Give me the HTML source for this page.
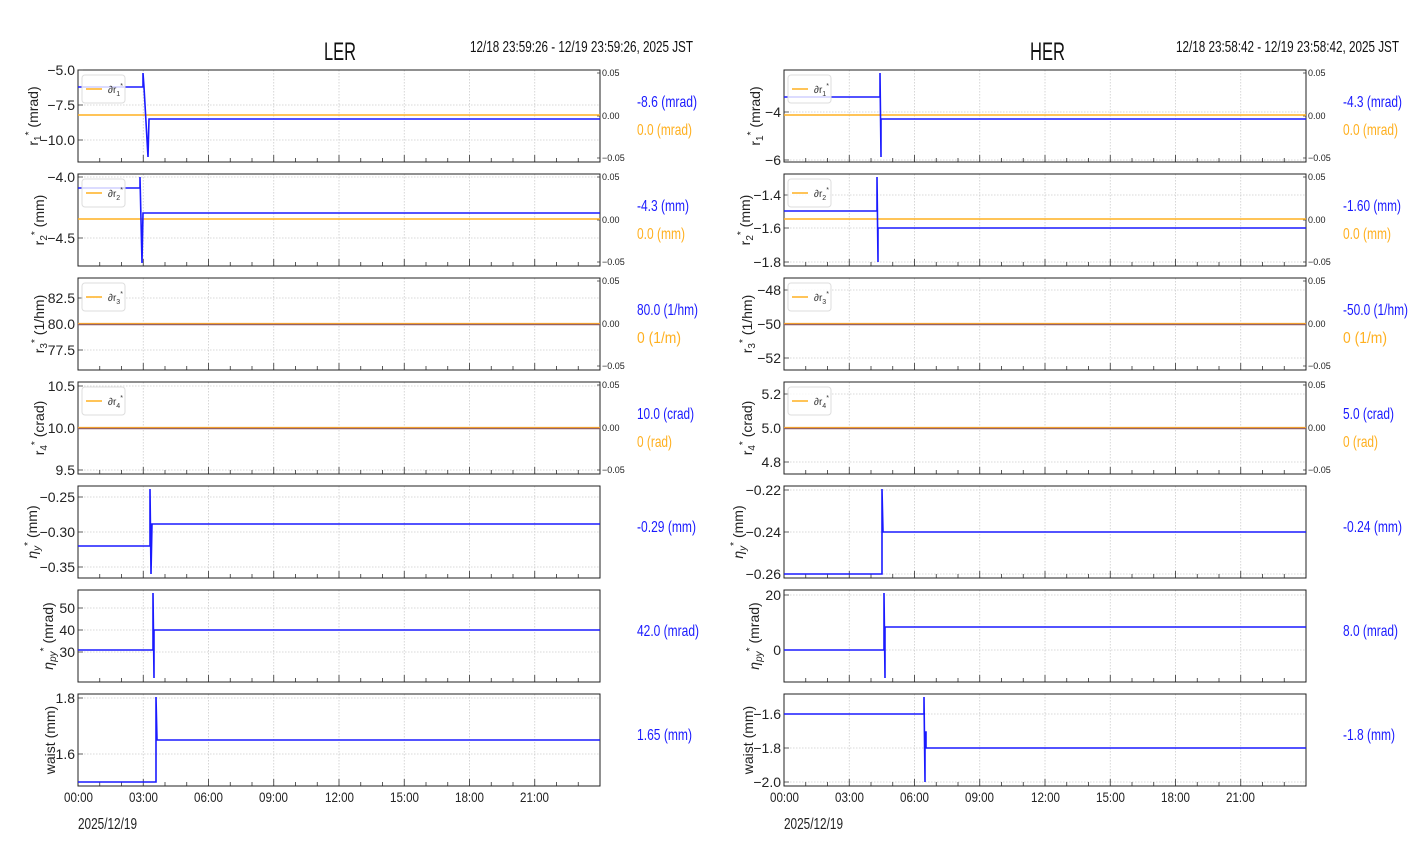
<!DOCTYPE html>
<html><head><meta charset="utf-8"><style>
html,body{margin:0;padding:0;background:#fff;}
svg{display:block;}
text{font-family:"Liberation Sans Narrow","Liberation Sans",sans-serif;}
.t{font-size:14px;fill:#222;}
.r{font-size:9px;fill:#222;}
.yl{font-family:"DejaVu Sans","Liberation Sans",sans-serif;font-size:14px;fill:#222;}
.b{fill:#1a1aff;}
.o{fill:#ffb020;}
.lg{font-size:10px;fill:#333;}
</style></head><body>
<svg width="1412" height="864" viewBox="0 0 1412 864" xmlns="http://www.w3.org/2000/svg">
<defs>
<g id="fr">
 <g stroke="#ccc" stroke-width="0.8" stroke-dasharray="1.5,1.5">
  <line x1="65.25" y1="0" x2="65.25" y2="92"/><line x1="130.5" y1="0" x2="130.5" y2="92"/><line x1="195.75" y1="0" x2="195.75" y2="92"/><line x1="261" y1="0" x2="261" y2="92"/><line x1="326.25" y1="0" x2="326.25" y2="92"/><line x1="391.5" y1="0" x2="391.5" y2="92"/><line x1="456.75" y1="0" x2="456.75" y2="92"/>
 </g>
 <g stroke="#333" stroke-width="0.8">
  <path d="M21.75 92v-4M43.5 92v-4M87 92v-4M108.75 92v-4M152.25 92v-4M174 92v-4M217.5 92v-4M239.25 92v-4M282.75 92v-4M304.5 92v-4M348 92v-4M369.75 92v-4M413.25 92v-4M435 92v-4M478.5 92v-4M500.25 92v-4"/>
  <path d="M65.25 92v-7M130.5 92v-7M195.75 92v-7M261 92v-7M326.25 92v-7M391.5 92v-7M456.75 92v-7"/>
 </g>
 <rect x="0" y="0" width="522" height="92" fill="none" stroke="#222" stroke-width="1"/>
</g>
<g id="ra">
 <path d="M522 3h-3M522 46h-3M522 88h-3" stroke="#333" stroke-width="0.8"/>
</g>
<g id="lgb"><rect x="4" y="5" width="43" height="28" rx="3" fill="#fff" fill-opacity="0.8" stroke="#ddd"/><line x1="8" y1="19" x2="24" y2="19" stroke="#ffb020" stroke-width="1.5"/></g>
</defs>

<text x="324" y="60" font-size="25" fill="#111" textLength="32" lengthAdjust="spacingAndGlyphs">LER</text>
<text x="470" y="52" font-size="16" fill="#111" textLength="223" lengthAdjust="spacingAndGlyphs">12/18 23:59:26 - 12/19 23:59:26, 2025 JST</text>
<text x="1030" y="60" font-size="25" fill="#111" textLength="35" lengthAdjust="spacingAndGlyphs">HER</text>
<text x="1176" y="52" font-size="16" fill="#111" textLength="223" lengthAdjust="spacingAndGlyphs">12/18 23:58:42 - 12/19 23:58:42, 2025 JST</text>

<g transform="translate(78,0)">
 <g transform="translate(0,70)">
  <g stroke="#ccc" stroke-width="0.8" stroke-dasharray="1.5,1.5"><line x1="0" y1="35" x2="522" y2="35"/><line x1="0" y1="70" x2="522" y2="70"/></g>
  <use href="#fr"/><use href="#ra"/>
  <path d="M0 0h5M0 35h5M0 70h5" stroke="#333" stroke-width="0.8"/>
  <line x1="0" y1="45" x2="522" y2="45" stroke="#ffb020" stroke-width="1.5"/>
  <path d="M0 17H65V3L66 17L70 87L71 49H522" fill="none" stroke="#1a1aff" stroke-width="1.6"/>
  <use href="#lgb"/>
 </g>
 <g transform="translate(0,174)">
  <g stroke="#ccc" stroke-width="0.8" stroke-dasharray="1.5,1.5"><line x1="0" y1="3" x2="522" y2="3"/><line x1="0" y1="64" x2="522" y2="64"/></g>
  <use href="#fr"/><use href="#ra"/>
  <path d="M0 3h5M0 64h5" stroke="#333" stroke-width="0.8"/>
  <line x1="0" y1="45" x2="522" y2="45" stroke="#ffb020" stroke-width="1.5"/>
  <path d="M0 14H62V3L64 89L65 39H522" fill="none" stroke="#1a1aff" stroke-width="1.6"/>
  <use href="#lgb"/>
 </g>
 <g transform="translate(0,278)">
  <g stroke="#ccc" stroke-width="0.8" stroke-dasharray="1.5,1.5"><line x1="0" y1="20" x2="522" y2="20"/><line x1="0" y1="72" x2="522" y2="72"/></g>
  <use href="#fr"/><use href="#ra"/>
  <path d="M0 20h5M0 46h5M0 72h5" stroke="#333" stroke-width="0.8"/>
  <line x1="0" y1="46.5" x2="522" y2="46.5" stroke="#8a5a6a" stroke-width="1.4"/>
  <line x1="0" y1="45.5" x2="522" y2="45.5" stroke="#f0a030" stroke-width="1.2"/>
  <use href="#lgb"/>
 </g>
 <g transform="translate(0,382)">
  <g stroke="#ccc" stroke-width="0.8" stroke-dasharray="1.5,1.5"><line x1="0" y1="4" x2="522" y2="4"/><line x1="0" y1="88" x2="522" y2="88"/></g>
  <use href="#fr"/><use href="#ra"/>
  <path d="M0 4h5M0 46h5M0 88h5" stroke="#333" stroke-width="0.8"/>
  <line x1="0" y1="46.5" x2="522" y2="46.5" stroke="#8a5a6a" stroke-width="1.4"/>
  <line x1="0" y1="45.5" x2="522" y2="45.5" stroke="#f0a030" stroke-width="1.2"/>
  <use href="#lgb"/>
 </g>
 <g transform="translate(0,486)">
  <g stroke="#ccc" stroke-width="0.8" stroke-dasharray="1.5,1.5"><line x1="0" y1="11" x2="522" y2="11"/><line x1="0" y1="46" x2="522" y2="46"/><line x1="0" y1="81" x2="522" y2="81"/></g>
  <use href="#fr"/>
  <path d="M0 11h5M0 46h5M0 81h5" stroke="#333" stroke-width="0.8"/>
  <path d="M0 60H72V3L73 88L74 38H522" fill="none" stroke="#1a1aff" stroke-width="1.6"/>
 </g>
 <g transform="translate(0,590)">
  <g stroke="#ccc" stroke-width="0.8" stroke-dasharray="1.5,1.5"><line x1="0" y1="18" x2="522" y2="18"/><line x1="0" y1="40" x2="522" y2="40"/><line x1="0" y1="62" x2="522" y2="62"/></g>
  <use href="#fr"/>
  <path d="M0 18h5M0 40h5M0 62h5" stroke="#333" stroke-width="0.8"/>
  <path d="M0 60H75V3L76 88L76 40H522" fill="none" stroke="#1a1aff" stroke-width="1.6"/>
 </g>
 <g transform="translate(0,694)">
  <g stroke="#ccc" stroke-width="0.8" stroke-dasharray="1.5,1.5"><line x1="0" y1="4" x2="522" y2="4"/><line x1="0" y1="60" x2="522" y2="60"/></g>
  <use href="#fr"/>
  <path d="M0 4h5M0 60h5" stroke="#333" stroke-width="0.8"/>
  <path d="M0 88H78V3L79 46H522" fill="none" stroke="#1a1aff" stroke-width="1.6"/>
 </g>
</g>

<g class="t" text-anchor="end">
 <text x="75" y="75">−5.0</text><text x="75" y="110">−7.5</text><text x="75" y="145">−10.0</text>
 <text x="75" y="182">−4.0</text><text x="75" y="243">−4.5</text>
 <text x="75" y="303">82.5</text><text x="75" y="329">80.0</text><text x="75" y="355">77.5</text>
 <text x="75" y="391">10.5</text><text x="75" y="433">10.0</text><text x="75" y="475">9.5</text>
 <text x="75" y="502">−0.25</text><text x="75" y="537">−0.30</text><text x="75" y="572">−0.35</text>
 <text x="75" y="613">50</text><text x="75" y="635">40</text><text x="75" y="657">30</text>
 <text x="75" y="703">1.8</text><text x="75" y="759">1.6</text>
</g>
<g class="r">
 <text x="602" y="76">0.05</text><text x="602" y="119">0.00</text><text x="602" y="161">−0.05</text>
 <text x="602" y="180">0.05</text><text x="602" y="223">0.00</text><text x="602" y="265">−0.05</text>
 <text x="602" y="284">0.05</text><text x="602" y="327">0.00</text><text x="602" y="369">−0.05</text>
 <text x="602" y="388">0.05</text><text x="602" y="431">0.00</text><text x="602" y="473">−0.05</text>
</g>
<g class="lg">
 <text x="108" y="93">∂r<tspan font-size="7" dy="3">1</tspan><tspan font-size="7" dy="-8">*</tspan></text>
 <text x="108" y="197">∂r<tspan font-size="7" dy="3">2</tspan><tspan font-size="7" dy="-8">*</tspan></text>
 <text x="108" y="301">∂r<tspan font-size="7" dy="3">3</tspan><tspan font-size="7" dy="-8">*</tspan></text>
 <text x="108" y="405">∂r<tspan font-size="7" dy="3">4</tspan><tspan font-size="7" dy="-8">*</tspan></text>
</g>
<g class="t">
 <text x="64" y="802" textLength="29" lengthAdjust="spacingAndGlyphs">00:00</text><text x="129" y="802" textLength="29" lengthAdjust="spacingAndGlyphs">03:00</text><text x="194" y="802" textLength="29" lengthAdjust="spacingAndGlyphs">06:00</text><text x="259" y="802" textLength="29" lengthAdjust="spacingAndGlyphs">09:00</text><text x="325" y="802" textLength="29" lengthAdjust="spacingAndGlyphs">12:00</text><text x="390" y="802" textLength="29" lengthAdjust="spacingAndGlyphs">15:00</text><text x="455" y="802" textLength="29" lengthAdjust="spacingAndGlyphs">18:00</text><text x="520" y="802" textLength="29" lengthAdjust="spacingAndGlyphs">21:00</text>
</g>
<text x="78" y="829" font-size="16" fill="#222" textLength="59" lengthAdjust="spacingAndGlyphs">2025/12/19</text>
<g font-size="16">
 <text class="b" x="637" y="107" textLength="60" lengthAdjust="spacingAndGlyphs">-8.6 (mrad)</text><text class="o" x="637" y="135" textLength="55" lengthAdjust="spacingAndGlyphs">0.0 (mrad)</text>
 <text class="b" x="637" y="211" textLength="52" lengthAdjust="spacingAndGlyphs">-4.3 (mm)</text><text class="o" x="637" y="239" textLength="48" lengthAdjust="spacingAndGlyphs">0.0 (mm)</text>
 <text class="b" x="637" y="315" textLength="61" lengthAdjust="spacingAndGlyphs">80.0 (1/hm)</text><text class="o" x="637" y="343" textLength="44" lengthAdjust="spacingAndGlyphs">0 (1/m)</text>
 <text class="b" x="637" y="419" textLength="57" lengthAdjust="spacingAndGlyphs">10.0 (crad)</text><text class="o" x="637" y="447" textLength="35" lengthAdjust="spacingAndGlyphs">0 (rad)</text>
 <text class="b" x="637" y="532" textLength="59" lengthAdjust="spacingAndGlyphs">-0.29 (mm)</text>
 <text class="b" x="637" y="636" textLength="62" lengthAdjust="spacingAndGlyphs">42.0 (mrad)</text>
 <text class="b" x="637" y="740" textLength="55" lengthAdjust="spacingAndGlyphs">1.65 (mm)</text>
</g>
<g class="yl" text-anchor="middle">
 <text transform="translate(38,116) rotate(-90)">r<tspan font-size="10" dy="3">1</tspan><tspan font-size="10" dy="-9">*</tspan><tspan dy="6"> (mrad)</tspan></text>
 <text transform="translate(44,220) rotate(-90)">r<tspan font-size="10" dy="3">2</tspan><tspan font-size="10" dy="-9">*</tspan><tspan dy="6"> (mm)</tspan></text>
 <text transform="translate(44,324) rotate(-90)">r<tspan font-size="10" dy="3">3</tspan><tspan font-size="10" dy="-9">*</tspan><tspan dy="6"> (1/hm)</tspan></text>
 <text transform="translate(44,428) rotate(-90)">r<tspan font-size="10" dy="3">4</tspan><tspan font-size="10" dy="-9">*</tspan><tspan dy="6"> (crad)</tspan></text>
 <text transform="translate(37,532) rotate(-90)"><tspan font-style="italic">η</tspan><tspan font-size="10" dy="3" font-style="italic">y</tspan><tspan font-size="10" dy="-9">*</tspan><tspan dy="6"> (mm)</tspan></text>
 <text transform="translate(53,636) rotate(-90)"><tspan font-style="italic">η</tspan><tspan font-size="10" dy="3" font-style="italic">py</tspan><tspan font-size="10" dy="-9">*</tspan><tspan dy="6"> (mrad)</tspan></text>
 <text transform="translate(55,740) rotate(-90)">waist (mm)</text>
</g>

<g transform="translate(784,0)">
 <g transform="translate(0,70)">
  <g stroke="#ccc" stroke-width="0.8" stroke-dasharray="1.5,1.5"><line x1="0" y1="42" x2="522" y2="42"/><line x1="0" y1="90" x2="522" y2="90"/></g>
  <use href="#fr"/><use href="#ra"/>
  <path d="M0 42h5M0 90h5" stroke="#333" stroke-width="0.8"/>
  <line x1="0" y1="45" x2="522" y2="45" stroke="#ffb020" stroke-width="1.5"/>
  <path d="M0 27H96V3L97 87L97 49H522" fill="none" stroke="#1a1aff" stroke-width="1.6"/>
  <use href="#lgb"/>
 </g>
 <g transform="translate(0,174)">
  <g stroke="#ccc" stroke-width="0.8" stroke-dasharray="1.5,1.5"><line x1="0" y1="21" x2="522" y2="21"/><line x1="0" y1="54" x2="522" y2="54"/><line x1="0" y1="88" x2="522" y2="88"/></g>
  <use href="#fr"/><use href="#ra"/>
  <path d="M0 21h5M0 54h5M0 88h5" stroke="#333" stroke-width="0.8"/>
  <line x1="0" y1="45" x2="522" y2="45" stroke="#ffb020" stroke-width="1.5"/>
  <path d="M0 37H93V3L94 88L94 54H522" fill="none" stroke="#1a1aff" stroke-width="1.6"/>
  <use href="#lgb"/>
 </g>
 <g transform="translate(0,278)">
  <g stroke="#ccc" stroke-width="0.8" stroke-dasharray="1.5,1.5"><line x1="0" y1="12" x2="522" y2="12"/><line x1="0" y1="80" x2="522" y2="80"/></g>
  <use href="#fr"/><use href="#ra"/>
  <path d="M0 12h5M0 46h5M0 80h5" stroke="#333" stroke-width="0.8"/>
  <line x1="0" y1="46.5" x2="522" y2="46.5" stroke="#8a5a6a" stroke-width="1.4"/>
  <line x1="0" y1="45.5" x2="522" y2="45.5" stroke="#f0a030" stroke-width="1.2"/>
  <use href="#lgb"/>
 </g>
 <g transform="translate(0,382)">
  <g stroke="#ccc" stroke-width="0.8" stroke-dasharray="1.5,1.5"><line x1="0" y1="12" x2="522" y2="12"/><line x1="0" y1="80" x2="522" y2="80"/></g>
  <use href="#fr"/><use href="#ra"/>
  <path d="M0 12h5M0 46h5M0 80h5" stroke="#333" stroke-width="0.8"/>
  <line x1="0" y1="46.5" x2="522" y2="46.5" stroke="#8a5a6a" stroke-width="1.4"/>
  <line x1="0" y1="45.5" x2="522" y2="45.5" stroke="#f0a030" stroke-width="1.2"/>
  <use href="#lgb"/>
 </g>
 <g transform="translate(0,486)">
  <g stroke="#ccc" stroke-width="0.8" stroke-dasharray="1.5,1.5"><line x1="0" y1="4" x2="522" y2="4"/><line x1="0" y1="46" x2="522" y2="46"/><line x1="0" y1="88" x2="522" y2="88"/></g>
  <use href="#fr"/>
  <path d="M0 4h5M0 46h5M0 88h5" stroke="#333" stroke-width="0.8"/>
  <path d="M0 88H98V3L99 46H522" fill="none" stroke="#1a1aff" stroke-width="1.6"/>
 </g>
 <g transform="translate(0,590)">
  <g stroke="#ccc" stroke-width="0.8" stroke-dasharray="1.5,1.5"><line x1="0" y1="5" x2="522" y2="5"/><line x1="0" y1="60" x2="522" y2="60"/></g>
  <use href="#fr"/>
  <path d="M0 5h5M0 60h5" stroke="#333" stroke-width="0.8"/>
  <path d="M0 60H100V3L101 88L101 37H522" fill="none" stroke="#1a1aff" stroke-width="1.6"/>
 </g>
 <g transform="translate(0,694)">
  <g stroke="#ccc" stroke-width="0.8" stroke-dasharray="1.5,1.5"><line x1="0" y1="20" x2="522" y2="20"/><line x1="0" y1="54" x2="522" y2="54"/><line x1="0" y1="88" x2="522" y2="88"/></g>
  <use href="#fr"/>
  <path d="M0 20h5M0 54h5M0 88h5" stroke="#333" stroke-width="0.8"/>
  <path d="M0 20H140V3L141 88L141 38L142 38L142 54H522" fill="none" stroke="#1a1aff" stroke-width="1.6"/>
 </g>
</g>

<g class="t" text-anchor="end">
 <text x="781" y="117">−4</text><text x="781" y="165">−6</text>
 <text x="781" y="200">−1.4</text><text x="781" y="233">−1.6</text><text x="781" y="267">−1.8</text>
 <text x="781" y="295">−48</text><text x="781" y="329">−50</text><text x="781" y="363">−52</text>
 <text x="781" y="399">5.2</text><text x="781" y="433">5.0</text><text x="781" y="467">4.8</text>
 <text x="781" y="495">−0.22</text><text x="781" y="537">−0.24</text><text x="781" y="579">−0.26</text>
 <text x="781" y="600">20</text><text x="781" y="655">0</text>
 <text x="781" y="719">−1.6</text><text x="781" y="753">−1.8</text><text x="781" y="787">−2.0</text>
</g>
<g class="r">
 <text x="1308" y="76">0.05</text><text x="1308" y="119">0.00</text><text x="1308" y="161">−0.05</text>
 <text x="1308" y="180">0.05</text><text x="1308" y="223">0.00</text><text x="1308" y="265">−0.05</text>
 <text x="1308" y="284">0.05</text><text x="1308" y="327">0.00</text><text x="1308" y="369">−0.05</text>
 <text x="1308" y="388">0.05</text><text x="1308" y="431">0.00</text><text x="1308" y="473">−0.05</text>
</g>
<g class="lg">
 <text x="814" y="93">∂r<tspan font-size="7" dy="3">1</tspan><tspan font-size="7" dy="-8">*</tspan></text>
 <text x="814" y="197">∂r<tspan font-size="7" dy="3">2</tspan><tspan font-size="7" dy="-8">*</tspan></text>
 <text x="814" y="301">∂r<tspan font-size="7" dy="3">3</tspan><tspan font-size="7" dy="-8">*</tspan></text>
 <text x="814" y="405">∂r<tspan font-size="7" dy="3">4</tspan><tspan font-size="7" dy="-8">*</tspan></text>
</g>
<g class="t">
 <text x="770" y="802" textLength="29" lengthAdjust="spacingAndGlyphs">00:00</text><text x="835" y="802" textLength="29" lengthAdjust="spacingAndGlyphs">03:00</text><text x="900" y="802" textLength="29" lengthAdjust="spacingAndGlyphs">06:00</text><text x="965" y="802" textLength="29" lengthAdjust="spacingAndGlyphs">09:00</text><text x="1031" y="802" textLength="29" lengthAdjust="spacingAndGlyphs">12:00</text><text x="1096" y="802" textLength="29" lengthAdjust="spacingAndGlyphs">15:00</text><text x="1161" y="802" textLength="29" lengthAdjust="spacingAndGlyphs">18:00</text><text x="1226" y="802" textLength="29" lengthAdjust="spacingAndGlyphs">21:00</text>
</g>
<text x="784" y="829" font-size="16" fill="#222" textLength="59" lengthAdjust="spacingAndGlyphs">2025/12/19</text>
<g font-size="16">
 <text class="b" x="1343" y="107" textLength="59" lengthAdjust="spacingAndGlyphs">-4.3 (mrad)</text><text class="o" x="1343" y="135" textLength="55" lengthAdjust="spacingAndGlyphs">0.0 (mrad)</text>
 <text class="b" x="1343" y="211" textLength="58" lengthAdjust="spacingAndGlyphs">-1.60 (mm)</text><text class="o" x="1343" y="239" textLength="48" lengthAdjust="spacingAndGlyphs">0.0 (mm)</text>
 <text class="b" x="1343" y="315" textLength="65" lengthAdjust="spacingAndGlyphs">-50.0 (1/hm)</text><text class="o" x="1343" y="343" textLength="44" lengthAdjust="spacingAndGlyphs">0 (1/m)</text>
 <text class="b" x="1343" y="419" textLength="51" lengthAdjust="spacingAndGlyphs">5.0 (crad)</text><text class="o" x="1343" y="447" textLength="35" lengthAdjust="spacingAndGlyphs">0 (rad)</text>
 <text class="b" x="1343" y="532" textLength="59" lengthAdjust="spacingAndGlyphs">-0.24 (mm)</text>
 <text class="b" x="1343" y="636" textLength="55" lengthAdjust="spacingAndGlyphs">8.0 (mrad)</text>
 <text class="b" x="1343" y="740" textLength="52" lengthAdjust="spacingAndGlyphs">-1.8 (mm)</text>
</g>
<g class="yl" text-anchor="middle">
 <text transform="translate(760,116) rotate(-90)">r<tspan font-size="10" dy="3">1</tspan><tspan font-size="10" dy="-9">*</tspan><tspan dy="6"> (mrad)</tspan></text>
 <text transform="translate(750,220) rotate(-90)">r<tspan font-size="10" dy="3">2</tspan><tspan font-size="10" dy="-9">*</tspan><tspan dy="6"> (mm)</tspan></text>
 <text transform="translate(752,324) rotate(-90)">r<tspan font-size="10" dy="3">3</tspan><tspan font-size="10" dy="-9">*</tspan><tspan dy="6"> (1/hm)</tspan></text>
 <text transform="translate(752,428) rotate(-90)">r<tspan font-size="10" dy="3">4</tspan><tspan font-size="10" dy="-9">*</tspan><tspan dy="6"> (crad)</tspan></text>
 <text transform="translate(743,532) rotate(-90)"><tspan font-style="italic">η</tspan><tspan font-size="10" dy="3" font-style="italic">y</tspan><tspan font-size="10" dy="-9">*</tspan><tspan dy="6"> (mm)</tspan></text>
 <text transform="translate(759,636) rotate(-90)"><tspan font-style="italic">η</tspan><tspan font-size="10" dy="3" font-style="italic">py</tspan><tspan font-size="10" dy="-9">*</tspan><tspan dy="6"> (mrad)</tspan></text>
 <text transform="translate(753,740) rotate(-90)">waist (mm)</text>
</g>
</svg>
</body></html>
